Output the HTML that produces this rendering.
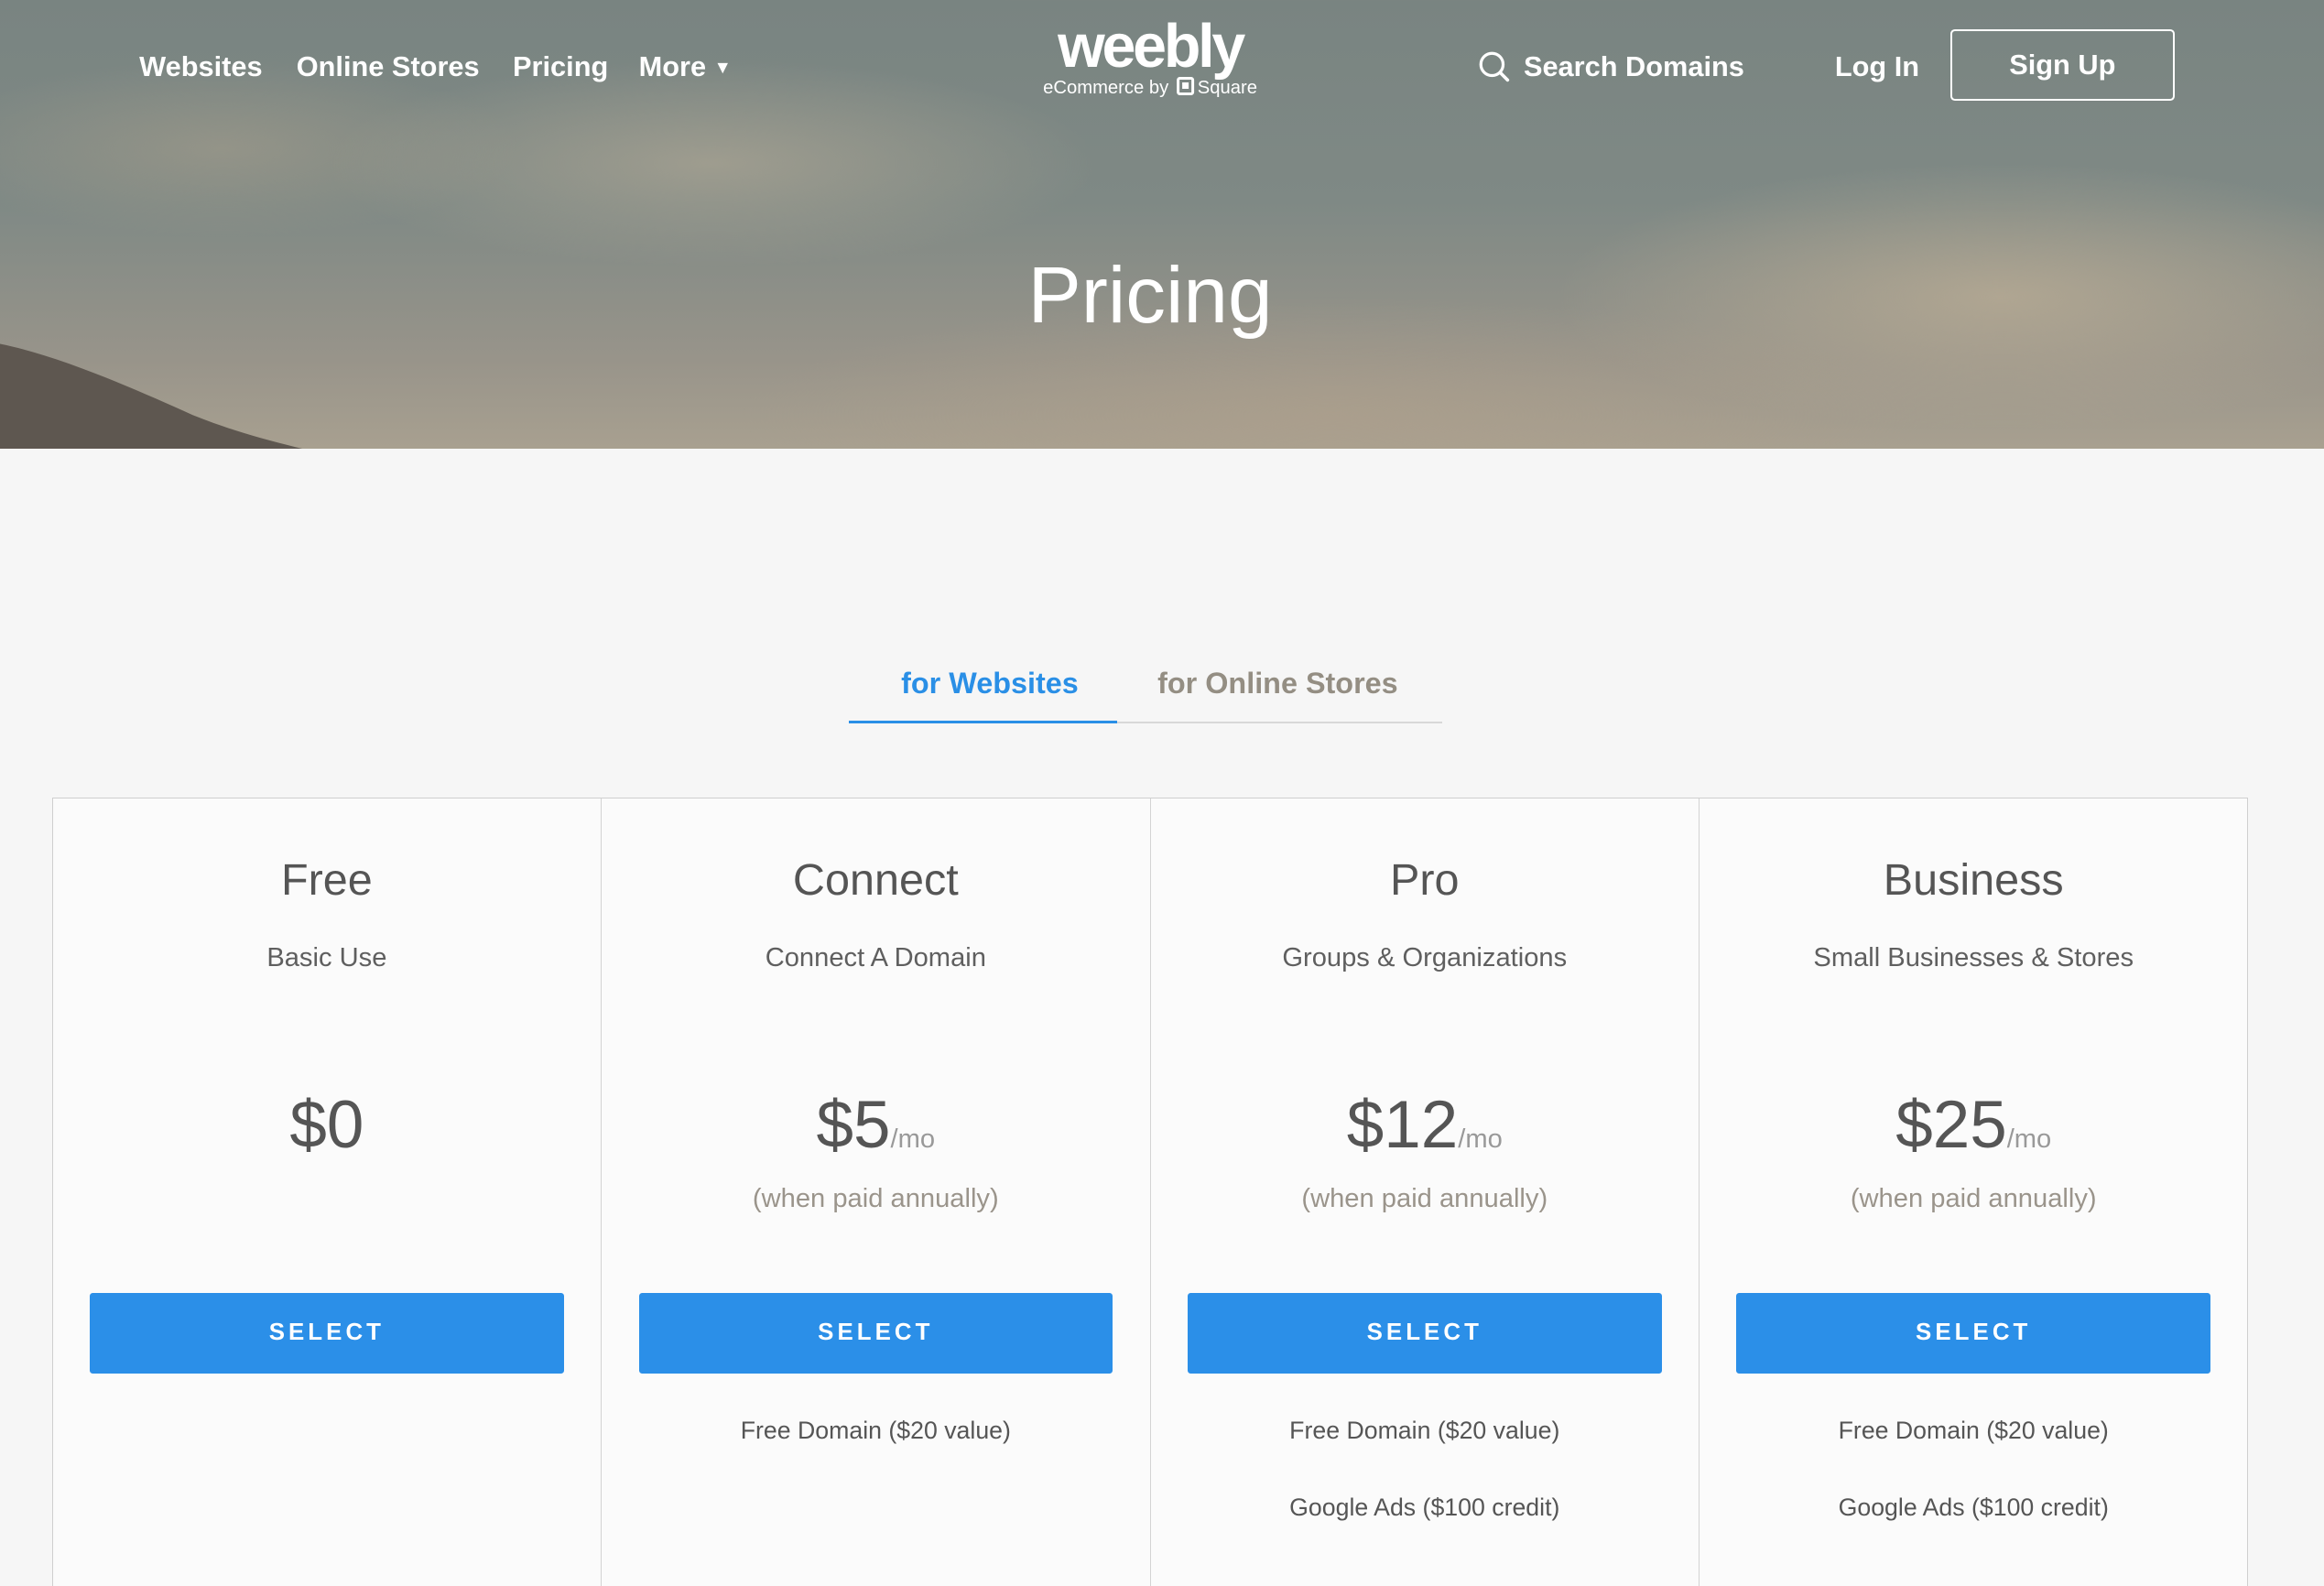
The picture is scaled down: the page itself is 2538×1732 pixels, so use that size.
<!DOCTYPE html>
<html><head><meta charset="utf-8"><style>
*{margin:0;padding:0;box-sizing:border-box}
html,body{width:2538px;height:1732px;overflow:hidden;background:#f6f6f6}
#w{zoom:1.61862;width:1568px;height:1070px;position:relative;font-family:"Liberation Sans",sans-serif;background:#f6f6f6;overflow:hidden}
.hero{position:absolute;left:0;top:0;width:1568px;height:303px;overflow:hidden;
background:
radial-gradient(ellipse 300px 90px at 1350px 200px,rgba(190,175,150,.7),transparent),
radial-gradient(ellipse 260px 70px at 480px 110px,rgba(180,170,150,.6),transparent),
radial-gradient(ellipse 200px 60px at 150px 100px,rgba(170,160,140,.5),transparent),
radial-gradient(ellipse 400px 80px at 900px 280px,rgba(175,160,140,.6),transparent),
linear-gradient(180deg,#798481 0%,#7f8985 45%,#98948a 80%,#a8a090 100%)}
.nav{position:absolute;top:45px;transform:translateY(-50%);color:#fff;font-size:19px;font-weight:bold;white-space:nowrap}
.logo{position:absolute;left:776px;top:8px;transform:translateX(-50%);color:#fff;font-weight:bold;font-size:41px;letter-spacing:-2px}
.sub{position:absolute;left:776px;top:52px;transform:translateX(-50%);color:#fff;font-size:12.5px;white-space:nowrap}
.sq{display:inline-block;width:12px;height:12px;border:2px solid #fff;border-radius:2px;vertical-align:-1px;position:relative;margin:0 2px}
.sq:after{content:"";position:absolute;left:2px;top:2px;width:4px;height:4px;background:#fff}
.signup{position:absolute;left:1316px;top:20px;width:151px;height:48px;border:1.5px solid #fff;border-radius:3px;color:#fff;font-size:19px;font-weight:bold;text-align:center;line-height:46px}
.title{position:absolute;left:0;width:1552px;top:168px;text-align:center;color:#fff;font-size:54px}
.tab{position:absolute;top:450px;font-size:20px;font-weight:bold}
.table{position:absolute;left:35px;top:538px;width:1482px;height:540px;border:1px solid #cfcfcf;background:#fbfbfb;display:flex}
.col{flex:1;border-right:1px solid #d3d3d3;position:relative;text-align:center;color:#555}
.col:last-child{border-right:none}
.col h2{position:absolute;top:38px;width:100%;font-size:30px;font-weight:normal;color:#555}
.col .s{position:absolute;top:98px;width:100%;font-size:18px;color:#5f5f5f}
.col .p{position:absolute;top:195px;width:100%;font-size:45px;color:#555}
.col .p span{font-size:18px;color:#999}
.col .a{position:absolute;top:260px;width:100%;font-size:18px;color:#9a948b}
.btn{position:absolute;left:25px;right:25px;top:334px;height:54px;background:#2b8fe8;border-radius:2px;color:#fff;font-weight:bold;font-size:16px;letter-spacing:2.5px;line-height:54px}
.f{position:absolute;width:100%;font-size:16.5px;color:#555}
</style></head><body><div id="w">
<div class="hero">
<svg width="1568" height="303" style="position:absolute;left:0;top:0"><path d="M0 232 C40 240 90 262 130 280 C160 292 185 298 205 303 L0 303 Z" fill="#5e5750"/></svg>
</div>
<div class="nav" style="left:94px">Websites</div>
<div class="nav" style="left:200px">Online Stores</div>
<div class="nav" style="left:346px">Pricing</div>
<div class="nav" style="left:431px">More <span style="font-size:12px;vertical-align:2px">▼</span></div>
<div class="logo">weebly</div>
<div class="sub">eCommerce by <span class="sq"></span>Square</div>
<svg style="position:absolute;left:997px;top:34px" width="22" height="22" viewBox="0 0 22 22"><circle cx="9.5" cy="9.5" r="7.5" fill="none" stroke="#fff" stroke-width="2"/><path d="M15 15l5 5" stroke="#fff" stroke-width="2.2" stroke-linecap="round"/></svg>
<div class="nav" style="left:1028px">Search Domains</div>
<div class="nav" style="left:1238px">Log In</div>
<div class="signup">Sign Up</div>
<div class="title">Pricing</div>
<div class="tab" style="left:608px;color:#2a8fe6">for Websites</div>
<div class="tab" style="left:781px;color:#948e83">for Online Stores</div>
<div style="position:absolute;left:754px;top:487px;width:219px;height:1px;background:#d8d8d8"></div>
<div style="position:absolute;left:573px;top:486px;width:181px;height:2px;background:#2a8fe6"></div>
<div class="table">
<div class="col"><h2>Free</h2><div class="s">Basic Use</div><div class="p">$0</div><div class="btn">SELECT</div></div>
<div class="col"><h2>Connect</h2><div class="s">Connect A Domain</div><div class="p">$5<span>/mo</span></div><div class="a">(when paid annually)</div><div class="btn">SELECT</div><div class="f" style="top:417px">Free Domain ($20 value)</div></div>
<div class="col"><h2>Pro</h2><div class="s">Groups &amp; Organizations</div><div class="p">$12<span>/mo</span></div><div class="a">(when paid annually)</div><div class="btn">SELECT</div><div class="f" style="top:417px">Free Domain ($20 value)</div><div class="f" style="top:469px">Google Ads ($100 credit)</div></div>
<div class="col"><h2>Business</h2><div class="s">Small Businesses &amp; Stores</div><div class="p">$25<span>/mo</span></div><div class="a">(when paid annually)</div><div class="btn">SELECT</div><div class="f" style="top:417px">Free Domain ($20 value)</div><div class="f" style="top:469px">Google Ads ($100 credit)</div></div>
</div>
</div></body></html>
